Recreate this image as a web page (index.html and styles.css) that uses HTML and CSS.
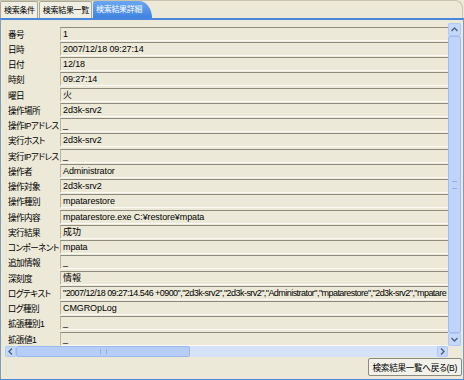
FILE: index.html
```html
<!DOCTYPE html>
<html lang="ja">
<head>
  <meta charset="UTF-8">
  <title>検索結果詳細</title>
  <link rel="stylesheet" href="styles.css">
</head>
<body>
  <div class="tabs">
    <div class="tab">検索条件</div>
    <div class="tab">検索結果一覧</div>
    <div class="tab active">検索結果詳細</div>
  </div>

  <div class="panel">
    <div class="view">
      <div class="rows">
        <div class="row"><span class="label">番号</span><span class="field">1</span></div>
        <div class="row"><span class="label">日時</span><span class="field">2007/12/18 09:27:14</span></div>
        <div class="row"><span class="label">日付</span><span class="field">12/18</span></div>
        <div class="row"><span class="label">時刻</span><span class="field">09:27:14</span></div>
        <div class="row"><span class="label">曜日</span><span class="field">火</span></div>
        <div class="row"><span class="label">操作場所</span><span class="field">2d3k-srv2</span></div>
        <div class="row"><span class="label">操作IPアドレス</span><span class="field">_</span></div>
        <div class="row"><span class="label">実行ホスト</span><span class="field">2d3k-srv2</span></div>
        <div class="row"><span class="label">実行IPアドレス</span><span class="field">_</span></div>
        <div class="row"><span class="label">操作者</span><span class="field">Administrator</span></div>
        <div class="row"><span class="label">操作対象</span><span class="field">2d3k-srv2</span></div>
        <div class="row"><span class="label">操作種別</span><span class="field">mpatarestore</span></div>
        <div class="row"><span class="label">操作内容</span><span class="field">mpatarestore.exe C:¥restore¥mpata</span></div>
        <div class="row"><span class="label">実行結果</span><span class="field">成功</span></div>
        <div class="row"><span class="label">コンポーネント</span><span class="field">mpata</span></div>
        <div class="row"><span class="label">追加情報</span><span class="field">_</span></div>
        <div class="row"><span class="label">深刻度</span><span class="field">情報</span></div>
        <div class="row"><span class="label">ログテキスト</span><span class="field field-long">"2007/12/18 09:27:14.546 +0900","2d3k-srv2","2d3k-srv2","Administrator","mpatarestore","2d3k-srv2","mpatare</span></div>
        <div class="row"><span class="label">ログ種別</span><span class="field">CMGROpLog</span></div>
        <div class="row"><span class="label">拡張種別1</span><span class="field">_</span></div>
        <div class="row"><span class="label">拡張値1</span><span class="field">_</span></div>
      </div>

      <div class="vscroll">
        <span class="arrow">
          <svg width="7" height="5" viewBox="0 0 7 5"><path d="M0.5 4L3.5 1L6.5 4" fill="none" stroke="#4d6185" stroke-width="1.4"/></svg>
        </span>
        <span class="vthumb"><span class="grip-v"></span></span>
        <span class="arrow">
          <svg width="7" height="5" viewBox="0 0 7 5"><path d="M0.5 1L3.5 4L6.5 1" fill="none" stroke="#4d6185" stroke-width="1.4"/></svg>
        </span>
      </div>

      <div class="hscroll">
        <span class="arrow">
          <svg width="5" height="7" viewBox="0 0 5 7"><path d="M4 0.5L1 3.5L4 6.5" fill="none" stroke="#4d6185" stroke-width="1.4"/></svg>
        </span>
        <span class="hthumb"><span class="grip-h"></span></span>
        <span class="htrack"></span>
        <span class="arrow">
          <svg width="5" height="7" viewBox="0 0 5 7"><path d="M1 0.5L4 3.5L1 6.5" fill="none" stroke="#4d6185" stroke-width="1.4"/></svg>
        </span>
      </div>
      <div class="corner"></div>
    </div>

    <div class="footer">
      <button class="back">検索結果一覧へ戻る(B)</button>
    </div>
  </div>
</body>
</html>
```

FILE: styles.css
```css
body {
  margin: 0;
  width: 464px;
  height: 380px;
  background: #ece9d8;
  font-family: "Liberation Sans", "Noto Sans CJK JP", sans-serif;
  font-size: 9px;
  font-feature-settings: "palt";
  color: #000;
  overflow: hidden;
}

/* tab strip */
.tabs {
  display: flex;
  align-items: flex-end;
  height: 18px;
  margin-right: 1px;
  border-top: 1px solid #c8c4b0;
  border-right: 1px solid #c8c4b0;
  border-top-right-radius: 8px;
  box-sizing: border-box;
  font-size: 8px;
  letter-spacing: -0.3px;
}

.tab {
  height: 17px;
  line-height: 17px;
  padding: 0 2px 0 3px;
  border: 1px solid #a9a795;
  border-bottom: none;
  border-radius: 2px 2px 0 0;
  margin-right: 1px;
  background: #f1efe4;
  box-sizing: border-box;
  white-space: nowrap;
}

.tab.active {
  color: #fff;
  padding: 0 10px 0 3px;
  border: none;
  border-top-right-radius: 13px 17px;
  background: linear-gradient(#6aa6f2, #3f82e0);
}

/* content panel */
.panel {
  height: 362px;
  border: 1px solid #7f9db9;
  border-top: 2px solid #4a86dc;
  border-bottom-color: #4a86dc;
  box-sizing: border-box;
  display: flex;
  flex-direction: column;
}

.view {
  display: grid;
  grid-template-columns: 443px 13px;
  grid-template-rows: 323px 11px;
  margin: 3px 0 0 4px;
}

.rows {
  overflow: hidden;
  padding-top: 3px;
}

.row {
  display: flex;
  align-items: center;
  height: 15.25px;
}

.label {
  width: 52px;
  padding-left: 3px;
  flex-shrink: 0;
  white-space: nowrap;
  font-size: 8.6px;
  letter-spacing: -0.6px;
}

.field {
  flex: 1;
  min-width: 0;
  height: 12px;
  line-height: 12px;
  padding-left: 2px;
  border-top: 1px solid #8d8b7e;
  border-left: 1px solid #b9b6a4;
  border-bottom: 1px solid #fbfaf4;
  white-space: nowrap;
  overflow: hidden;
  letter-spacing: -0.1px;
}

.field-long {
  letter-spacing: -0.55px;
}

/* scroll bars */
.vscroll {
  display: flex;
  flex-direction: column;
  background: #d6e2fa;
}

.vthumb {
  flex: 1;
  display: flex;
  align-items: center;
  justify-content: center;
  background: #bfd3fb;
  border: 1px solid #a0bcf0;
  border-radius: 2px;
}

.grip-v {
  width: 5px;
  height: 6px;
  border-top: 1px solid #8eaef0;
  border-bottom: 1px solid #8eaef0;
}

.hscroll {
  display: flex;
  background: #d6e2fa;
}

.hthumb {
  width: 172px;
  display: flex;
  align-items: center;
  justify-content: center;
  background: #b6cdf7;
  border: 1px solid #9ab8ee;
  border-radius: 2px;
}

.grip-h {
  width: 5px;
  height: 5px;
  border-left: 1px solid #8eaef0;
  border-right: 1px solid #8eaef0;
}

.htrack {
  flex: 1;
}

.arrow {
  width: 11px;
  height: 11px;
  flex-shrink: 0;
  display: flex;
  align-items: center;
  justify-content: center;
  background: #c6d7fc;
  border: 1px solid #b0c8f5;
  border-radius: 2px;
  box-sizing: border-box;
}

.vscroll .arrow {
  width: 13px;
  height: 13px;
}

.corner {
  background: #ece9d8;
}

/* footer */
.footer {
  display: flex;
  justify-content: flex-end;
  padding: 1px 1px 0 0;
}

.back {
  height: 18px;
  padding: 0 4px;
  font-family: inherit;
  font-size: 8.6px;
  letter-spacing: -0.3px;
  font-feature-settings: "palt";
  background: #f2f1ea;
  border: 1px solid #8a8a80;
  border-radius: 2px;
  color: #000;
}
```
